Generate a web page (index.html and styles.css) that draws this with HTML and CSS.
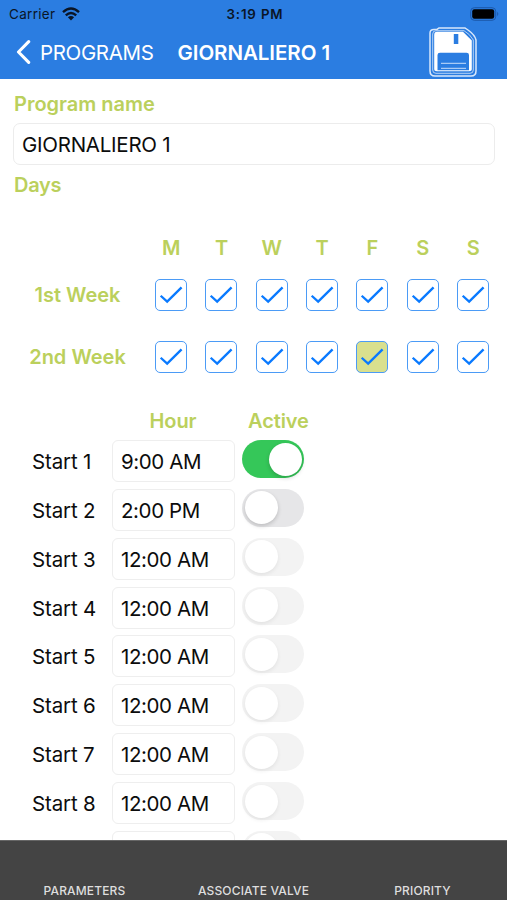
FILE: index.html
```html
<!DOCTYPE html>
<html lang="en">
<head>
<meta charset="utf-8">
<title>GIORNALIERO 1</title>
<link rel="stylesheet" href="styles.css">
</head>
<body>
<svg class="defs" width="0" height="0" aria-hidden="true">
  <symbol id="check" viewBox="0 0 32 32"><path d="M5 16.8 L11.9 23 L27.3 7.8" fill="none" stroke="#0a7aff" stroke-width="2.5"/></symbol>
</svg>
<div class="app">
  <header class="header">
    <div class="status">
      <div class="carrier"><span>Carrier</span>
        <svg class="wifi" width="18" height="14" viewBox="0 0 18 14"><g fill="none" stroke="#0a1526" stroke-width="2.4"><path d="M1 5.1 Q9 -2.1 17 5.1"/><path d="M3.8 8.3 Q9 3.5 14.2 8.3"/></g><path d="M5.9 10.3 Q9 7.7 12.1 10.3 L9 13.5Z" fill="#0a1526"/></svg>
      </div>
      <span class="clock">3:19 PM</span>
      <svg class="battery" width="30" height="14" viewBox="0 0 30 14"><rect x=".7" y=".7" width="25" height="12.6" rx="3.6" fill="none" stroke="#1c58a9" stroke-width="1"/><rect x="2.2" y="2.2" width="22" height="9.6" rx="2.2" fill="#000"/><path d="M27.2 4.8 Q29.4 7 27.2 9.2Z" fill="#1c58a9"/></svg>
    </div>
    <nav class="nav">
      <svg class="back" width="15" height="24" viewBox="0 0 15 24"><path d="M12.7 1.7 L2.5 12 L12.7 22.3" fill="none" stroke="#fff" stroke-width="3.1" stroke-linecap="round" stroke-linejoin="round"/></svg>
      <span class="parent">PROGRAMS</span>
      <h1 class="title">GIORNALIERO 1</h1>
      <svg class="save" width="48" height="50" viewBox="0 0 48 50">
        <path d="M10 1 H36 L39 3 Q46 8 47 13 V44 Q47 49 42 49 H6 Q1 49 1 44 V6 Q1 2.4 5 2.4 H8Z" fill="#2b7de1" stroke="#d9e8fb" stroke-width="1.5"/>
        <path d="M7 3.7 H35 Q41 7 44.3 13 V43 Q44.3 46.3 41 46.3 H7 Q3.7 46.3 3.7 43 V7 Q3.7 3.7 7 3.7Z" fill="none" stroke="#c5dcf8" stroke-width=".9"/>
        <path d="M8 4.8 H34 L42.8 13.5 V42 Q42.8 44.2 40 44.2 H8 Q5.2 44.2 5.2 42 V8 Q5.2 4.8 8 4.8Z" fill="#fff"/>
        <rect x="24.8" y="7" width="4.5" height="10" fill="#2b7de1"/>
        <path d="M8.5 43.3 V28 Q8.5 25.8 11 25.8 H37.5 Q40 25.8 40 28 V43.3Z" fill="#2b7de1"/>
        <path d="M12 36.3 H37 M12 41.3 H37" stroke="#a9cbf5" stroke-width="1.3"/>
      </svg>
    </nav>
  </header>
  <main class="content">
    <div class="label">Program name</div>
    <div class="name-field">GIORNALIERO 1</div>
    <div class="label days-label">Days</div>
    <section class="week">
      <span></span><b>M</b><b>T</b><b>W</b><b>T</b><b>F</b><b>S</b><b>S</b>
    </section>
    <section class="week boxes">
      <span class="week-name">1st Week</span>
      <svg class="box"><use href="#check"/></svg><svg class="box"><use href="#check"/></svg><svg class="box"><use href="#check"/></svg><svg class="box"><use href="#check"/></svg><svg class="box"><use href="#check"/></svg><svg class="box"><use href="#check"/></svg><svg class="box"><use href="#check"/></svg>
    </section>
    <section class="week boxes">
      <span class="week-name">2nd Week</span>
      <svg class="box"><use href="#check"/></svg><svg class="box"><use href="#check"/></svg><svg class="box"><use href="#check"/></svg><svg class="box"><use href="#check"/></svg><svg class="box today"><use href="#check"/></svg><svg class="box"><use href="#check"/></svg><svg class="box"><use href="#check"/></svg>
    </section>
    <div class="start-head"><span></span><span class="hour">Hour</span><span class="active">Active</span></div>
    <div class="start"><span>Start 1</span><div class="time">9:00 AM</div><i class="switch on"></i></div>
    <div class="start"><span>Start 2</span><div class="time">2:00 PM</div><i class="switch"></i></div>
    <div class="start"><span>Start 3</span><div class="time">12:00 AM</div><i class="switch off"></i></div>
    <div class="start"><span>Start 4</span><div class="time">12:00 AM</div><i class="switch off"></i></div>
    <div class="start"><span>Start 5</span><div class="time">12:00 AM</div><i class="switch off"></i></div>
    <div class="start"><span>Start 6</span><div class="time">12:00 AM</div><i class="switch off"></i></div>
    <div class="start"><span>Start 7</span><div class="time">12:00 AM</div><i class="switch off"></i></div>
    <div class="start"><span>Start 8</span><div class="time">12:00 AM</div><i class="switch off"></i></div>
    <div class="start"><span></span><div class="time"></div><i class="switch off"></i></div>
  </main>
  <footer class="tabs"><span>PARAMETERS</span><span>ASSOCIATE VALVE</span><span>PRIORITY</span></footer>
</div>
</body>
</html>
```
FILE: styles.css
```css
* { box-sizing: border-box; }
body { margin: 0; background: #fff; font-family: Inter, sans-serif; color: #0c0c0c; }
.defs { display: block; height: 0; }
.app { width: 507px; height: 900px; display: flex; flex-direction: column; overflow: hidden; white-space: nowrap; }
.header { flex: 0 0 79px; background: #2b7de1; }
.status { display: grid; grid-template-columns: 1fr auto 1fr; align-items: center; height: 27px; padding: 0 7px 0 9px; font-size: 13.5px; color: #0a1526; }
.carrier { display: flex; align-items: center; gap: 7px; letter-spacing: .3px; }
.clock { font-weight: 600; font-size: 13.3px; letter-spacing: .9px; margin-right: -1px; letter-spacing: .85px; }
.battery { justify-self: end; }
.nav { display: flex; align-items: center; height: 50px; padding: 0 30px 0 16px; color: #fff; }
.parent { font-size: 20.5px; margin-left: 9px; letter-spacing: -.35px; }
.title { font-size: 20.5px; font-weight: 600; margin: 0 0 0 24px; letter-spacing: -.05px; }
.save { margin-left: auto; }
.content { flex: 1; min-height: 0; overflow: hidden; }
.label, .week, .start-head { color: #bbd05c; font-size: 20px; font-weight: 600; }
.label { margin: 13px 0 0 14px; height: 24px; line-height: 24px; }
.name-field { margin: 7px 12px 0 13px; height: 42px; line-height: 42px; padding-left: 8px; border: 1px solid #ececec; border-radius: 7px; font-size: 20.5px; letter-spacing: -.25px; }
.days-label { margin-top: 8px; letter-spacing: -.3px; }
.week { display: grid; grid-template-columns: 146px repeat(7, 50.33px); align-items: center; justify-items: center; height: 24px; margin-top: 39px; }
.week b { font-weight: 600; }
.boxes { height: 32px; margin-top: 19px; }
.boxes + .boxes { margin-top: 30px; }
.week-name { padding-left: 9px; }
.box { width: 32px; height: 32px; border: 1.5px solid #4b9bf6; border-radius: 5px; }
.today { background: #d9e08e; }
.start-head { display: grid; grid-template-columns: 112px 122px 1fr; height: 24px; line-height: 24px; margin-top: 36px; margin-bottom: 7px; letter-spacing: -.1px; }
.hour { text-align: center; }
.active { padding-left: 14px; }
.start { display: grid; grid-template-columns: 80px 123px 62px; padding-left: 32px; height: 42px; margin-bottom: 6.86px; font-size: 20.5px; line-height: 44px; letter-spacing: -.15px; }
.time { height: 42px; line-height: 42px; border: 1px solid #eee; border-radius: 6px; padding-left: 8px; letter-spacing: -.4px; }
.switch { margin-left: 7px; width: 62px; height: 38px; border-radius: 19px; background: #e6e6e8; padding: 2.5px; display: flex; }
.switch::before { content: ""; width: 33px; height: 33px; border-radius: 50%; background: #fff; box-shadow: 0 2px 4px rgba(0,0,0,.18); }
.on { background: #35c759; justify-content: flex-end; }
.off { background: #f3f3f3; }
.off::before { box-shadow: 0 2px 4px rgba(0,0,0,.07); }
.tabs { flex: 0 0 60px; background: #444; border-top: 1px solid #666; color: #dedede; font-size: 12px; font-weight: 500; letter-spacing: .15px; display: grid; grid-template-columns: repeat(3, 1fr); text-align: center; padding-top: 42px; line-height: 15px; }
```
